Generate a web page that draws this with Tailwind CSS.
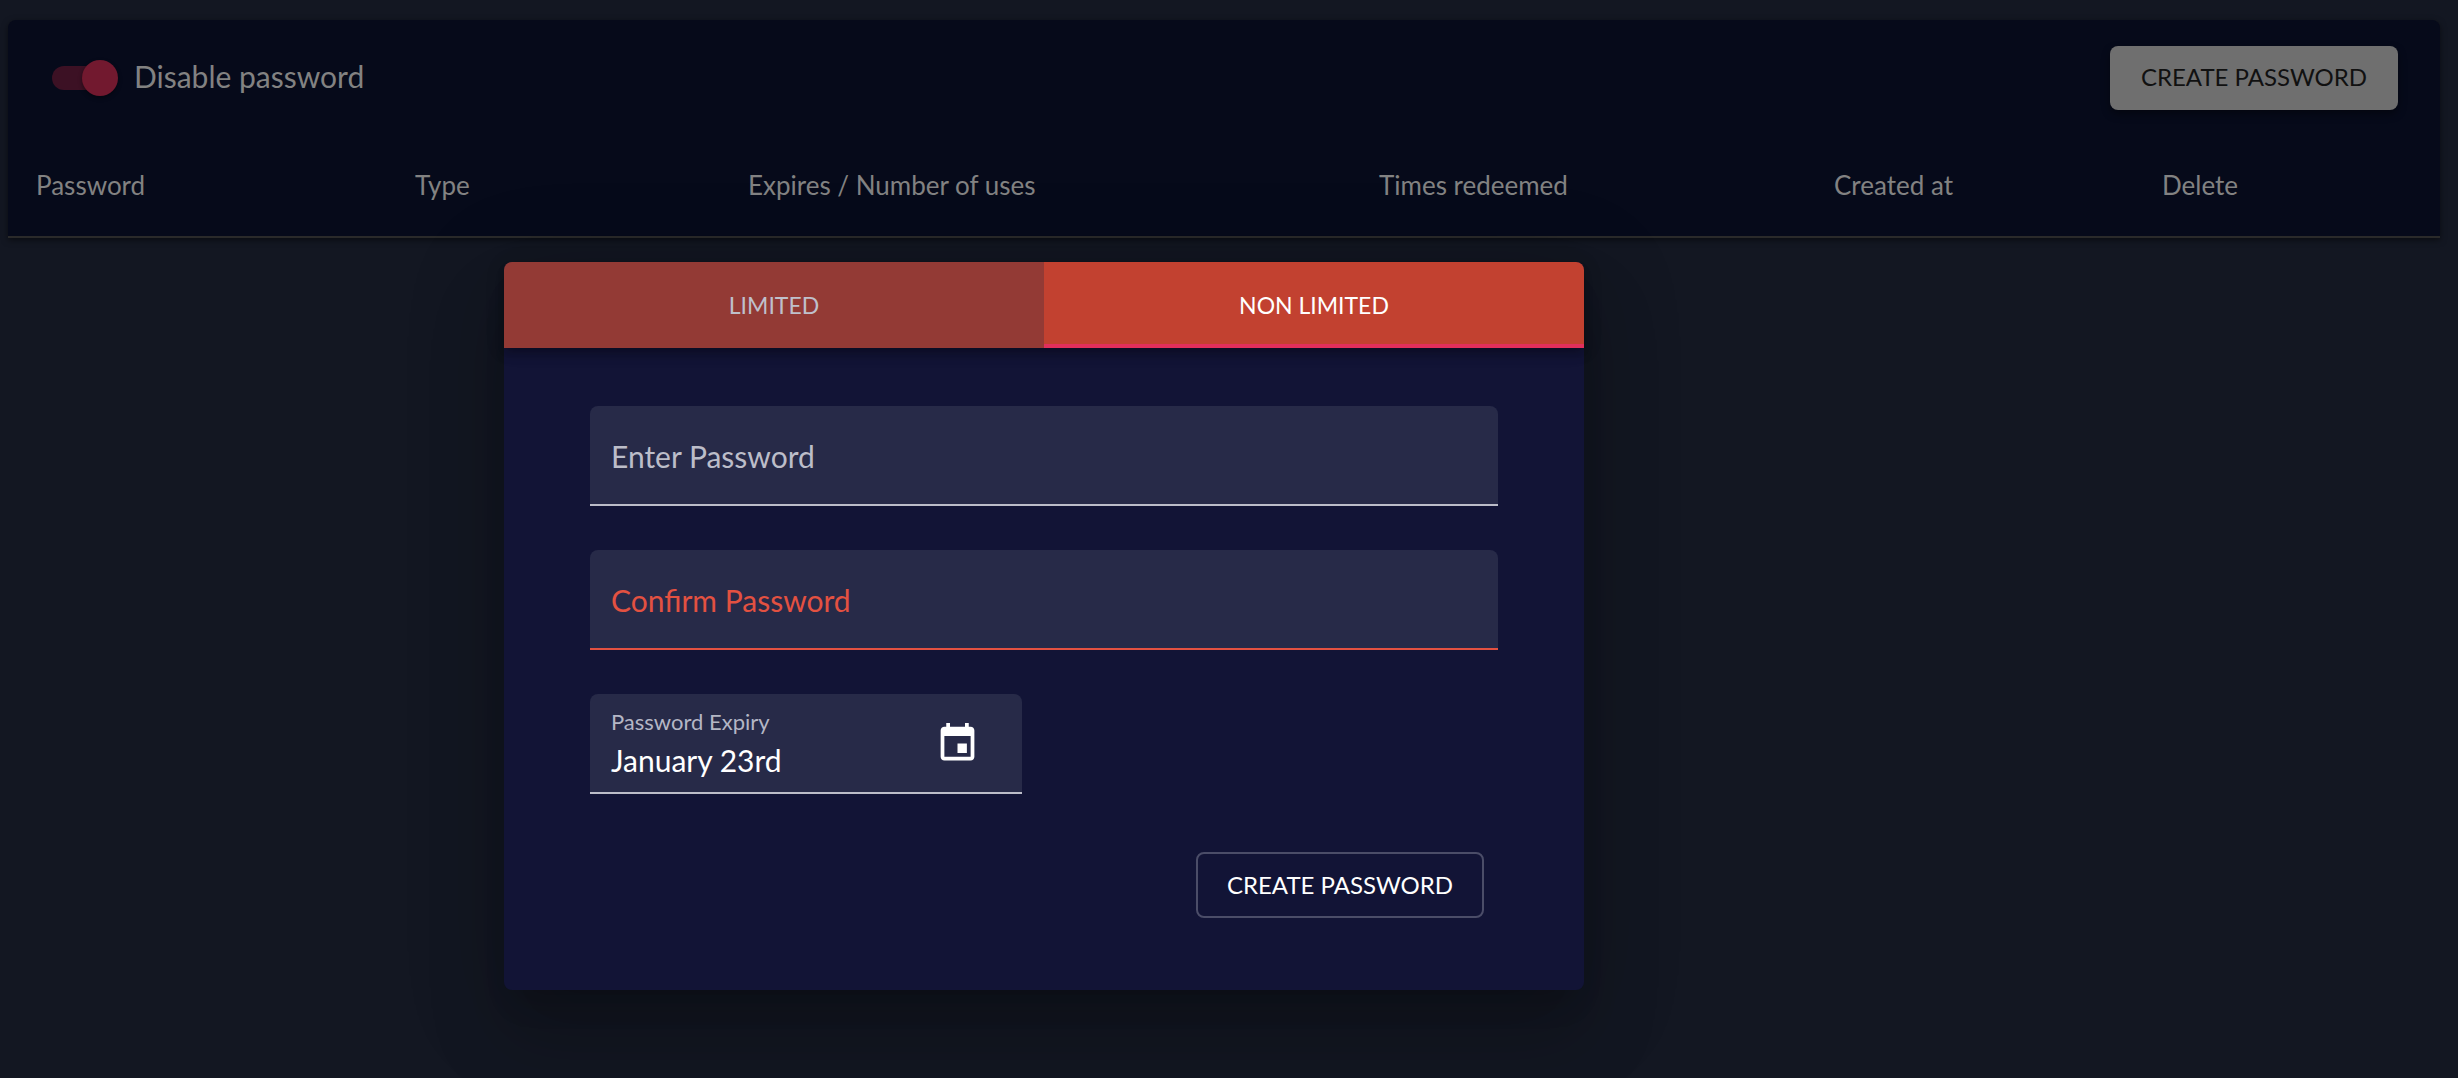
<!DOCTYPE html>
<html lang="en">
<head>
<meta charset="utf-8">
<meta name="viewport" content="width=device-width, initial-scale=1">
<title>Passwords</title>
<script src="https://cdn.jsdelivr.net/npm/@tailwindcss/browser@4"></script>
</head>
<body class="relative min-h-screen bg-[#131722] font-['Lato',sans-serif]">

<!-- Password list -->
<main class="pt-5 pr-[18px] pl-2">
  <section class="rounded-t-lg bg-[#060a1a] shadow-[0_2px_6px_rgba(0,0,0,0.5)]">
    <div class="flex items-center justify-between pt-[26px] pr-[42px] pb-6 pl-11">
      <label class="flex items-center gap-4 text-[30px] leading-9 text-[#828282]">
        <span class="relative flex h-9 w-[66px] items-center">
          <input type="checkbox" role="switch" checked class="absolute inset-0 z-10 size-full cursor-pointer opacity-0">
          <span class="h-6 w-16 rounded-full bg-[#3c1124]"></span>
          <span class="absolute right-0 size-9 rounded-full bg-[#72192f] shadow-[0_2px_4px_rgba(0,0,0,0.4)]"></span>
        </span>
        <span class="pb-1">Disable password</span>
      </label>
      <button type="button" class="h-16 w-72 rounded-lg bg-[#6f6f6f] pb-0.5 text-2xl text-[#111111] shadow-[0_4px_8px_rgba(0,0,0,0.4)]">CREATE PASSWORD</button>
    </div>
    <table class="w-full table-fixed border-b-2 border-[#2a2a2a] text-left text-[26px] text-[#828282]">
      <thead>
        <tr class="h-[103px]">
          <th scope="col" class="w-[379px] pl-7 font-normal">Password</th>
          <th scope="col" class="w-[333px] pl-7 font-normal">Type</th>
          <th scope="col" class="w-[631px] pl-7 font-normal">Expires / Number of uses</th>
          <th scope="col" class="w-[455px] pl-7 font-normal">Times redeemed</th>
          <th scope="col" class="w-[328px] pl-7 font-normal">Created at</th>
          <th scope="col" class="w-[306px] pl-7 font-normal">Delete</th>
        </tr>
      </thead>
    </table>
  </section>
</main>

<!-- New password dialog -->
<div class="absolute inset-0 flex items-start pt-[262px] pl-[504px]">
  <div role="dialog" aria-modal="true" class="w-full max-w-[1080px] rounded-lg bg-[#121436] shadow-[0_22px_30px_-14px_rgba(0,0,0,0.2),0_48px_76px_6px_rgba(0,0,0,0.14),0_18px_92px_16px_rgba(0,0,0,0.12)]">
    <div role="tablist" class="grid h-[86px] grid-cols-2 overflow-hidden rounded-t-lg text-[23px] shadow-[0_4px_8px_-2px_rgba(0,0,0,0.2),0_8px_10px_rgba(0,0,0,0.14),0_2px_20px_rgba(0,0,0,0.12)]">
      <button type="button" role="tab" aria-selected="false" class="bg-[#933a35] text-[#bfc0cb]">LIMITED</button>
      <button type="button" role="tab" aria-selected="true" class="border-b-4 border-[#e12f5b] bg-[#c24130] pt-1 text-white">NON LIMITED</button>
    </div>
    <form class="flex flex-col gap-11 px-[86px] pt-[58px] pb-[72px]">
      <div class="relative flex h-[100px] items-center">
        <input id="password" type="password" class="size-full rounded-t-lg border-b-2 border-[#bcbdc9] bg-[#272a48] px-6 text-[30px] text-white outline-none">
        <label for="password" class="absolute left-[21px] text-[30px] leading-9 text-[#bcbdc9]">Enter Password</label>
      </div>
      <div class="relative flex h-[100px] items-center">
        <input id="confirm" type="password" aria-invalid="true" class="size-full rounded-t-lg border-b-2 border-[#e35141] bg-[#272a48] px-6 text-[30px] text-white outline-none">
        <label for="confirm" class="absolute left-[21px] text-[30px] leading-9 text-[#e35141]">Confirm Password</label>
      </div>
      <div class="flex h-[100px] w-[432px] items-center rounded-t-lg border-b-2 border-[#bcbdc9] bg-[#272a48] pr-[42px] pl-[21px]">
        <div class="flex min-w-0 flex-1 flex-col pt-0.5">
          <label for="expiry" class="text-[22px] leading-8 text-[#b4b6c5]">Password Expiry</label>
          <input id="expiry" type="text" value="January 23rd" readonly class="h-11 w-full bg-transparent text-[30px] text-white outline-none">
        </div>
        <button type="button" aria-label="Pick a date" class="text-white">
          <svg class="size-[45px]" viewBox="0 0 24 24" fill="currentColor" aria-hidden="true"><path d="M17 12h-5v5h5v-5zM16 1v2H8V1H6v2H5c-1.11 0-1.99.9-1.99 2L3 19c0 1.1.89 2 2 2h14c1.1 0 2-.9 2-2V5c0-1.1-.9-2-2-2h-1V1h-2zm3 18H5V8h14v11z"/></svg>
        </button>
      </div>
      <div class="flex justify-end pt-3.5 pr-3.5">
        <button type="submit" class="h-[66px] w-72 rounded-lg border-2 border-[#4b4d68] text-2xl text-white">CREATE PASSWORD</button>
      </div>
    </form>
  </div>
</div>

</body>
</html>
